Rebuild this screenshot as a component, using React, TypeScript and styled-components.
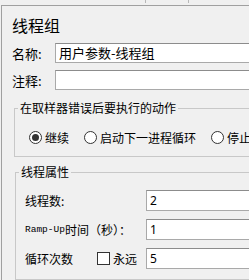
import React from "react";
import styled, { createGlobalStyle } from "styled-components";

const GlobalStyle = createGlobalStyle`
  html, body {
    margin: 0;
    padding: 0;
    background: #f0f0f0;
  }
  body {
    font-family: "Noto Sans CJK SC", "Noto Sans", sans-serif;
    color: #000;
  }
`;

const Page = styled.div`
  width: 249px;
  height: 280px;
  overflow: hidden;
  display: flex;
  flex-direction: column;
`;

// bit of the table above, only its bottom edge is visible
const TopStrip = styled.div`
  height: 5px;
  display: flex;
  flex-shrink: 0;
`;

const StripCell = styled.div<{ $w: number }>`
  width: ${(p) => p.$w}px;
  border-right: 1px solid #b8b8b8;
  height: 3px;
`;

const Panel = styled.div`
  width: 330px;
  margin-left: 1px;
  flex: 1;
  border-top: 1px solid #a0a0a0;
  border-left: 1px solid #a0a0a0;
  padding: 9px 0 0 10px;
  display: flex;
  flex-direction: column;
`;

const Title = styled.div`
  font-size: 16px;
  line-height: 20px;
  height: 20px;
`;

const FieldRow = styled.div<{ $mt: number }>`
  display: flex;
  align-items: center;
  height: 20px;
  margin-top: ${(p) => p.$mt}px;
`;

const FieldLabel = styled.div`
  width: 43px;
  font-size: 13px;
`;

const TextInput = styled.div`
  flex: 1;
  height: 20px;
  box-sizing: border-box;
  background: #fff;
  border: 1px solid #a9a9a9;
  border-top-color: #8c8c8c;
  padding-left: 3px;
  font-size: 13px;
  line-height: 18px;
  white-space: nowrap;
`;

const Group = styled.fieldset<{ $mt: number; $ml: number; $pt: number; $pb: number }>`
  margin: ${(p) => p.$mt}px 0 0 ${(p) => p.$ml}px;
  padding: ${(p) => p.$pt}px 0 ${(p) => p.$pb}px 3px;
  border: 1px solid #c8c8c8;
  min-width: 0;
`;

const Legend = styled.legend`
  padding: 0 2px;
  font-size: 12px;
  line-height: 16px;
`;

const RadioRow = styled.div`
  display: flex;
  align-items: center;
  gap: 15px;
  height: 16px;
  margin-left: 11px;
  font-size: 12px;
`;

const Option = styled.label`
  display: flex;
  align-items: center;
  gap: 3px;
  white-space: nowrap;
`;

const Radio = styled.span<{ $on?: boolean }>`
  width: 13px;
  height: 13px;
  box-sizing: border-box;
  border: 1px solid #333;
  border-radius: 50%;
  background: #fff;
  display: flex;
  align-items: center;
  justify-content: center;

  &::after {
    content: "";
    display: ${(p) => (p.$on ? "block" : "none")};
    width: 7px;
    height: 7px;
    border-radius: 50%;
    background: #333;
  }
`;

const Check = styled.span`
  width: 13px;
  height: 13px;
  box-sizing: border-box;
  border: 1px solid #333;
  background: #fff;
`;

const PropRows = styled.div`
  display: flex;
  flex-direction: column;
  gap: 8px;
  margin-left: 6px;
`;

const PropRow = styled.div`
  display: flex;
  align-items: center;
  height: 21px;
`;

const PropLabel = styled.div`
  width: 121px;
  display: flex;
  align-items: center;
  font-size: 12px;
  white-space: nowrap;
`;

const Mono = styled.span`
  font-family: "Liberation Mono", monospace;
  font-size: 9.5px;
`;

const Forever = styled.label`
  display: flex;
  align-items: center;
  gap: 3px;
  margin-left: 24px;
`;

const NumInput = styled(TextInput)`
  height: 21px;
  font-family: "Noto Sans", sans-serif;
  font-size: 12px;
  line-height: 19px;
`;

const App: React.FC = () => {
  return (
    <Page>
      <GlobalStyle />
      <TopStrip>
        <StripCell $w={145} />
        <StripCell $w={42} />
      </TopStrip>
      <Panel>
        <Title>线程组</Title>
        <FieldRow $mt={8}>
          <FieldLabel>名称:</FieldLabel>
          <TextInput>用户参数-线程组</TextInput>
        </FieldRow>
        <FieldRow $mt={7}>
          <FieldLabel>注释:</FieldLabel>
          <TextInput />
        </FieldRow>

        {/* 出错后的动作 */}
        <Group $mt={10} $ml={2} $pt={13} $pb={11}>
          <Legend>在取样器错误后要执行的动作</Legend>
          <RadioRow>
            <Option>
              <Radio $on />
              继续
            </Option>
            <Option>
              <Radio />
              启动下一进程循环
            </Option>
            <Option>
              <Radio />
              停止线程
            </Option>
          </RadioRow>
        </Group>

        {/* 线程属性 */}
        <Group $mt={7} $ml={3} $pt={10} $pb={10}>
          <Legend>线程属性</Legend>
          <PropRows>
            <PropRow>
              <PropLabel>线程数:</PropLabel>
              <NumInput>2</NumInput>
            </PropRow>
            <PropRow>
              <PropLabel>
                <Mono>Ramp-Up</Mono>时间（秒）：
              </PropLabel>
              <NumInput>1</NumInput>
            </PropRow>
            <PropRow>
              <PropLabel>
                循环次数
                <Forever>
                  <Check />
                  永远
                </Forever>
              </PropLabel>
              <NumInput>5</NumInput>
            </PropRow>
          </PropRows>
        </Group>
      </Panel>
    </Page>
  );
};

export default App;
